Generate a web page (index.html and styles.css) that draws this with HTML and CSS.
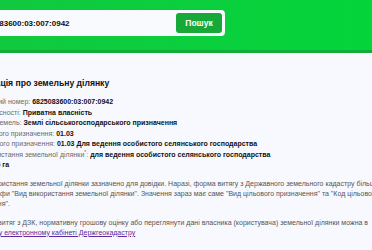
FILE: index.html
```html
<!DOCTYPE html>
<html lang="uk">
<head>
    <meta charset="UTF-8">
    <meta name="viewport" content="width=device-width, initial-scale=1.0">
    <title>Інформація про земельну ділянку</title>
    <link rel="stylesheet" href="styles.css">
</head>
<body>
    <div class="page">
        <div id="header">
            <div class="search">
                <span class="search-value">6825083600:03:007:0942</span>
                <button class="search-btn">Пошук</button>
            </div>
        </div>
        <div id="content">
            <h2>Інформація про земельну ділянку</h2>
            <div class="row"><span class="label">Кадастровий номер:</span> <b>6825083600:03:007:0942</b></div>
            <div class="row"><span class="label">Форма власності:</span> <b>Приватна власність</b></div>
            <div class="row"><span class="label">Категорія земель:</span> <b>Землі сільськогосподарського призначення</b></div>
            <div class="row"><span class="label">Код цільового призначення:</span> <b>01.03</b></div>
            <div class="row"><span class="label">Вид цільового призначення:</span> <b>01.03 Для ведення особистого селянського господарства</b></div>
            <div class="row"><span class="label">Вид використання земельної ділянки<sup>*</sup>:</span> <b>для ведення особистого селянського господарства</b></div>
            <div class="row"><span class="label">Площа:</span> <b>0.5 га</b></div>
            <p class="note">* Вид використання земельної ділянки зазначено для довідки. Наразі, форма витягу з Державного земельного кадастру більше не містить графи "Вид використання земельної ділянки". Значення зараз має саме "Вид цільового призначення" та "Код цільового призначення".</p>
            <p class="note">Отримати витяг з ДЗК, нормативну грошову оцінку або переглянути дані власника (користувача) земельної ділянки можна в <a href="#">особистому електронному кабінеті Держгеокадастру</a></p>
        </div>
    </div>
</body>
</html>
```

FILE: styles.css
```css
body {
    margin: 0;
    font-family: 'Liberation Sans', Arial, sans-serif;
    background-color: #f8f9fe;
    overflow: hidden;
}
.page {
    margin-left: -56px;
    width: 460px;
}
#header {
    background: linear-gradient(90deg, #13c640, #03d63a);
    padding: 10px 0 14px 0;
    border-bottom: 3px solid #12ad38;
}
.search {
    display: flex;
    align-items: center;
    justify-content: space-between;
    width: 275px;
    padding: 3px;
    background-color: #f8fafe;
    border-radius: 4px;
}
.search-value {
    padding-left: 30px;
    font-size: 8px;
    font-weight: bold;
    color: #111;
}
.search-btn {
    width: 46px;
    height: 20px;
    padding: 0;
    border: none;
    border-radius: 3px;
    background-color: #17a83a;
    color: #fff;
    font-family: 'Liberation Sans', Arial, sans-serif;
    font-size: 8.5px;
    font-weight: bold;
}
#content {
    padding: 25px 0 0 20px;
    font-size: 7px;
    color: #111;
}
h2 {
    margin: 0 0 8px;
    font-size: 8.6px;
    line-height: 11px;
}
.row {
    line-height: 10.5px;
}
.label {
    color: #6a6a6a;
}
sup {
    font-size: 5px;
    line-height: 0;
}
.note {
    margin: 8px 0 0;
    color: #555;
    line-height: 10px;
}
.note + .note {
    margin-top: 9px;
}
a {
    display: inline-block;
    color: #5e2a9c;
}
```
